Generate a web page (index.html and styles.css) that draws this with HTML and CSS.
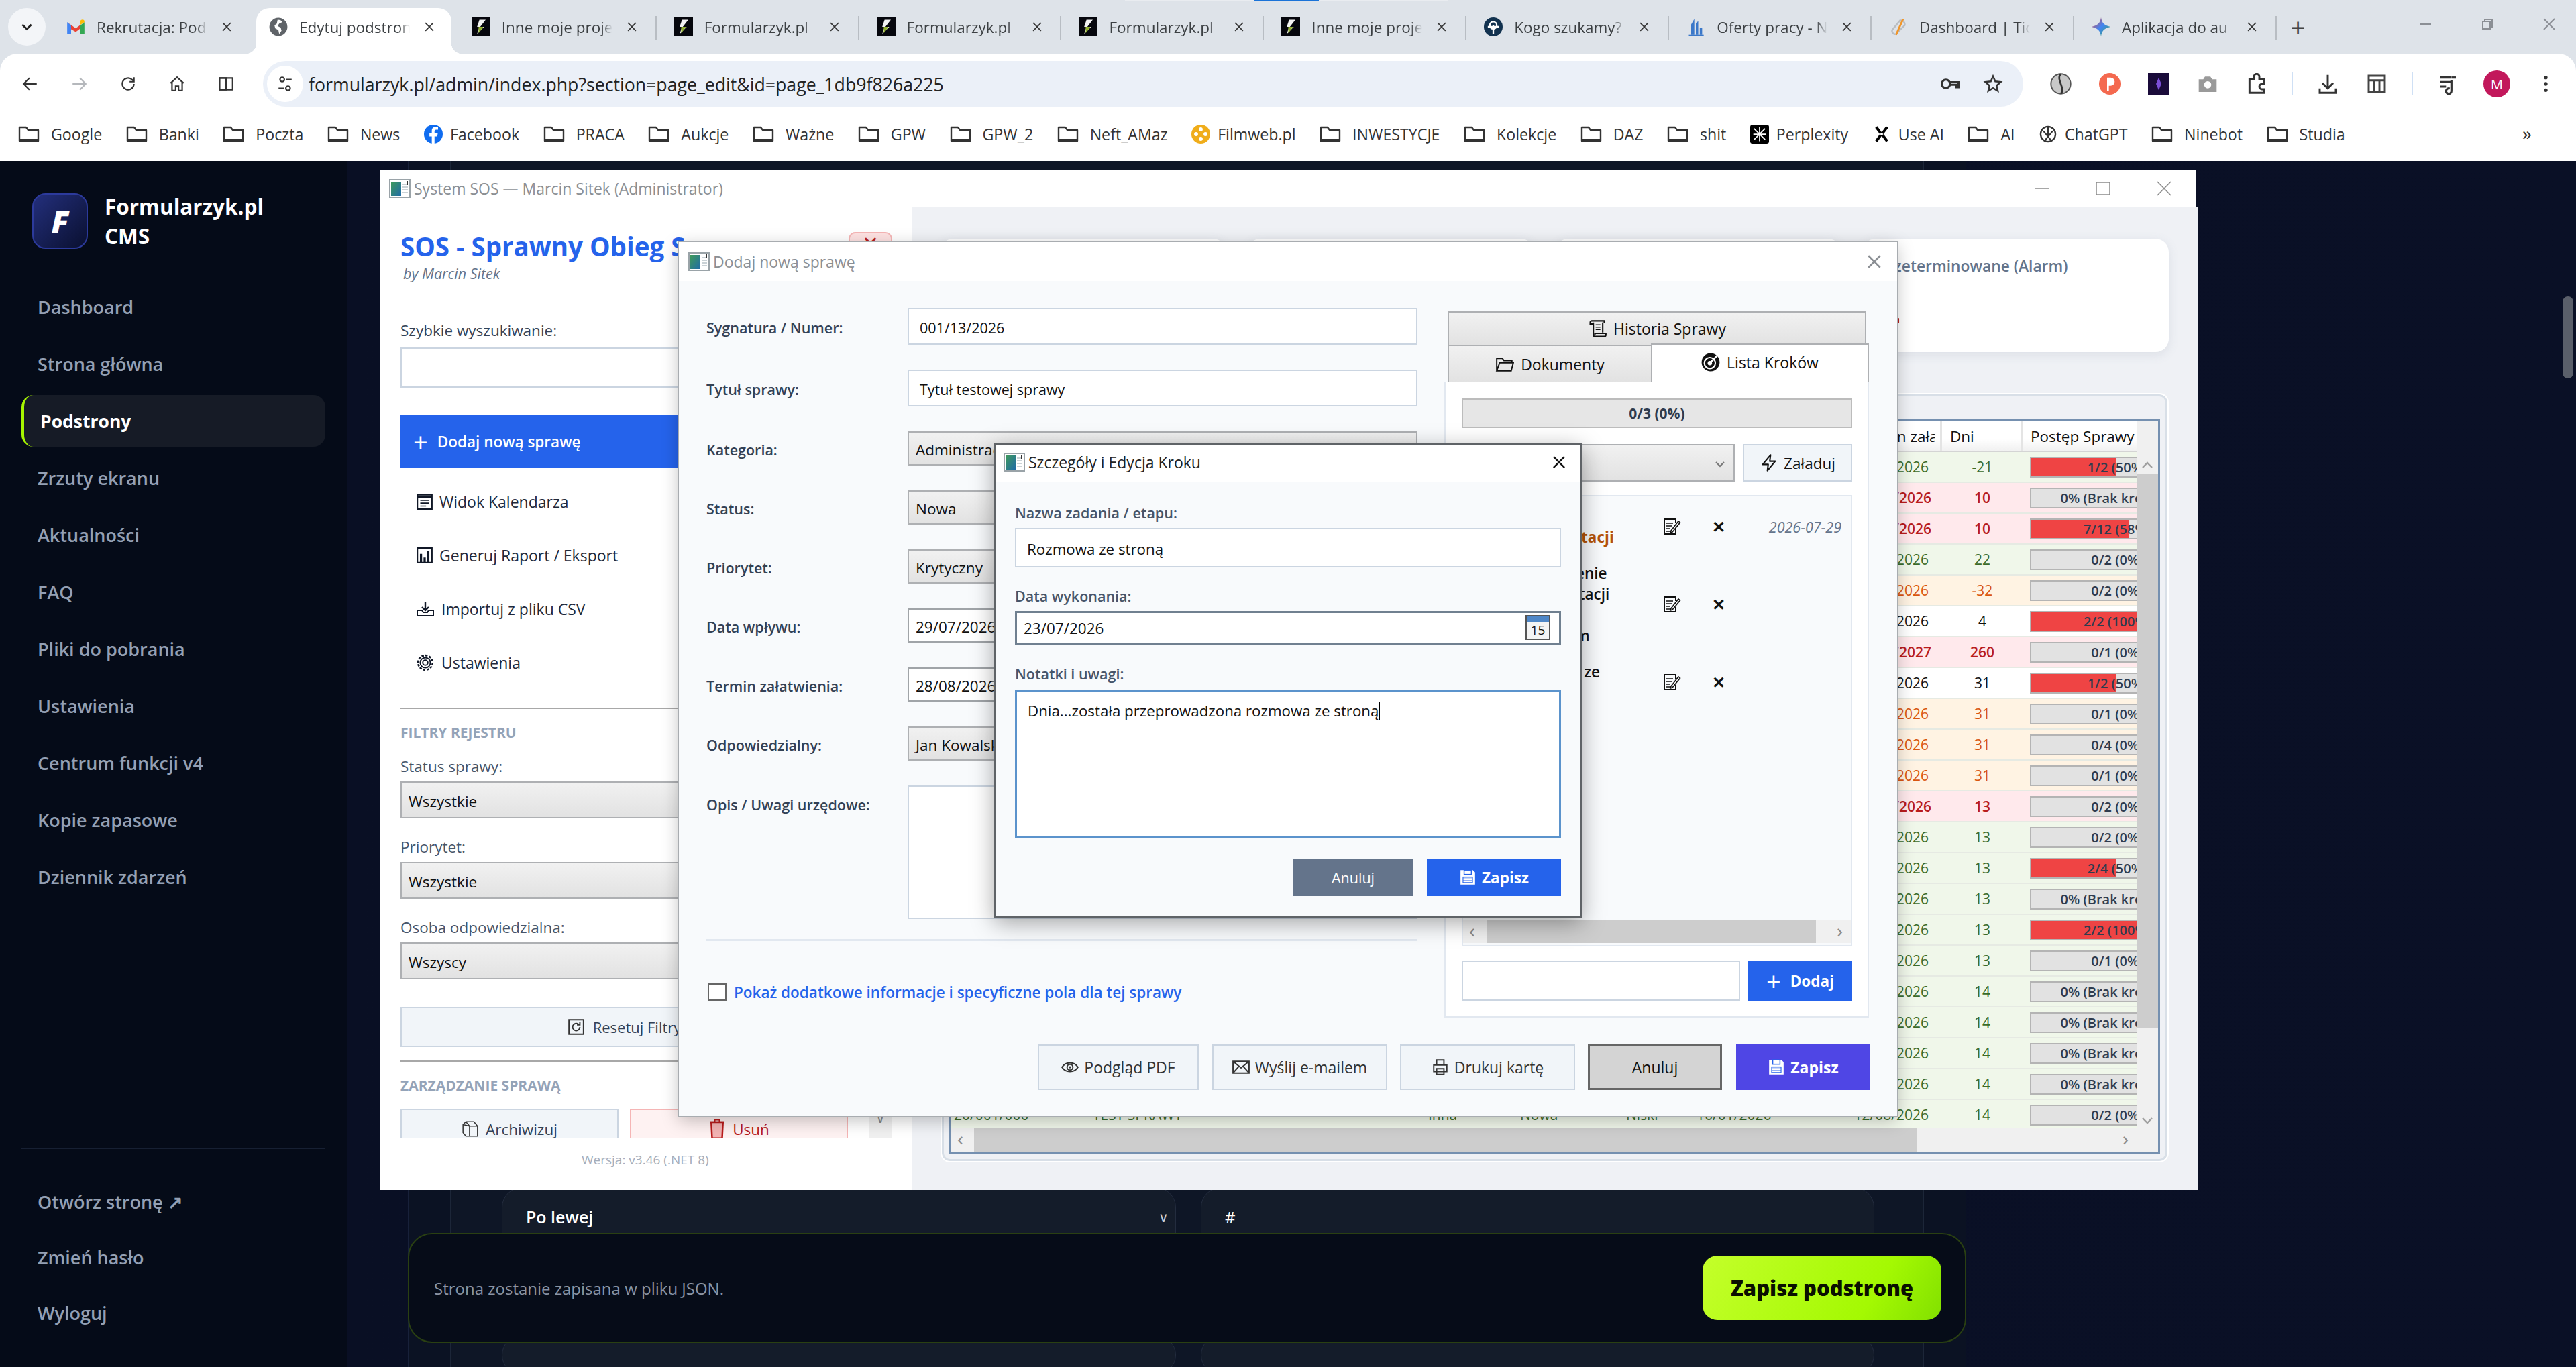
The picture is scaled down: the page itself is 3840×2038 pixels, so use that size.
FILE: index.html
```html
<!DOCTYPE html>
<html lang="pl">
<head>
    <meta charset="UTF-8">
    <title>Edytuj podstronę</title>
    <link rel="stylesheet" href="styles.css">
</head>
<body>
    <svg class="defs" width="0" height="0">
        <defs>
            <symbol id="i-folder" viewBox="0 0 32 24"><path d="M2 2h10l3 4h15v16H2z" fill="none" stroke="currentColor" stroke-width="2.400" stroke-linejoin="round"/><path d="M2 19h28v3.500H2z" fill="currentColor"/></symbol>
            <symbol id="i-x" viewBox="0 0 24 24"><path d="M5 5l14 14M19 5L5 19" fill="none" stroke="currentColor" stroke-width="2"/></symbol>
            <symbol id="i-fav-form" viewBox="0 0 24 24"><rect width="24" height="24" fill="#06070d"/><path d="M10 3h8l-7 9h5l-9 9 3-9H7z" fill="#f4f4f4"/><path d="M9 12h6l-6 8z" fill="#8fae2c"/></symbol>
            <symbol id="i-app" viewBox="0 0 32 32"><rect x="1" y="3" width="30" height="26" fill="#fff" stroke="#9aa3a8" stroke-width="2"/><defs><linearGradient id="g-app" x1="0" y1="0" x2="1" y2="1"><stop offset="0" stop-color="#3f9a5a"/><stop offset="1" stop-color="#1f6ba8"/></linearGradient></defs><rect x="3" y="6" width="15" height="21" fill="url(#g-app)"/><path d="M20 10h8M20 14h8M20 18h8M20 22h8" stroke="#b9c4c9" stroke-width="1.600"/><path d="M27 5v6" stroke="#333" stroke-width="2"/></symbol>
            <symbol id="i-edit" viewBox="0 0 28 28"><path d="M3 3h17v6M20 18v7H3V3" fill="none" stroke="#111" stroke-width="2"/><path d="M6 9h10M6 13h8M6 17h6M6 21h9" stroke="#111" stroke-width="1.400"/><path d="M13 20l11-14 2.500 2L15 22l-3 1z" fill="#fff" stroke="#111" stroke-width="1.600"/></symbol>
            <symbol id="i-save" viewBox="0 0 24 24"><path d="M2 2h17l3 3v17H2z" fill="currentColor"/><rect x="7" y="2" width="10" height="6" fill="none" stroke="#2563eb" stroke-width="1.400"/><rect x="5" y="11" width="14" height="9" fill="#2563eb"/><path d="M6 13h12M6 15.500h12M6 18h12" stroke="currentColor" stroke-width="1.300"/></symbol>
        </defs>
    </svg>

    <header class="browser">
        <div class="tabstrip">
            <button class="tab-search"><svg width="20" height="20" viewBox="0 0 24 24"><path d="M4 8l8 8 8-8" fill="none" stroke="#222" stroke-width="3.400"/></svg></button>
            <div class="tab">
                <svg class="fav" viewBox="0 0 24 24"><path d="M1 21V6l5 4v11z" fill="#4285f4"/><path d="M18 21V10l5-4v15z" fill="#34a853"/><path d="M1 6l11 8 6-4.500V14l-6 4.500L6 15V10z" fill="#ea4335"/><path d="M18 9.500L23 6V5c0-2-2.400-3-4-1.800L18 4z" fill="#fbbc04"/></svg>
                <span class="tab-title">Rekrutacja: Pod</span>
                <svg class="tab-close"><use href="#i-x"/></svg>
            </div>
            <div class="tab tab-active">
                <svg class="fav" viewBox="0 0 24 24"><circle cx="12" cy="12" r="11.500" fill="#5f6368"/><path d="M11 3c3 0 5 1 6 3l-4 2-2 3 4 2 1 4-3 4-1-5-4-2-1-4 3-2z" fill="#fff"/></svg>
                <span class="tab-title">Edytuj podstron</span>
                <svg class="tab-close"><use href="#i-x"/></svg>
            </div>
            <div class="tab">
                <svg class="fav"><use href="#i-fav-form"/></svg>
                <span class="tab-title">Inne moje proje</span>
                <svg class="tab-close"><use href="#i-x"/></svg>
            </div>
            <div class="tab">
                <svg class="fav"><use href="#i-fav-form"/></svg>
                <span class="tab-title">Formularzyk.pl</span>
                <svg class="tab-close"><use href="#i-x"/></svg>
            </div>
            <div class="tab">
                <svg class="fav"><use href="#i-fav-form"/></svg>
                <span class="tab-title">Formularzyk.pl</span>
                <svg class="tab-close"><use href="#i-x"/></svg>
            </div>
            <div class="tab">
                <svg class="fav"><use href="#i-fav-form"/></svg>
                <span class="tab-title">Formularzyk.pl</span>
                <svg class="tab-close"><use href="#i-x"/></svg>
            </div>
            <div class="tab">
                <svg class="fav"><use href="#i-fav-form"/></svg>
                <span class="tab-title">Inne moje proje</span>
                <svg class="tab-close"><use href="#i-x"/></svg>
            </div>
            <div class="tab">
                <svg class="fav" viewBox="0 0 24 24"><circle cx="12" cy="12" r="12" fill="#12324f"/><circle cx="12" cy="10" r="4.500" fill="none" stroke="#fff" stroke-width="2"/><path d="M12 10v11M5 12h14" stroke="#fff" stroke-width="2"/></svg>
                <span class="tab-title">Kogo szukamy?</span>
                <svg class="tab-close"><use href="#i-x"/></svg>
            </div>
            <div class="tab">
                <svg class="fav" viewBox="0 0 24 24"><path d="M6 22V9l4-7v20zM12 22V7l3-2v17zM17 22v-9h3v9z" fill="#3b78c9"/><path d="M3 22h19v2H3z" fill="#3b78c9"/></svg>
                <span class="tab-title">Oferty pracy - N</span>
                <svg class="tab-close"><use href="#i-x"/></svg>
            </div>
            <div class="tab">
                <svg class="fav" viewBox="0 0 24 24"><path d="M14 4a5 5 0 0 1 6 6L9 21a4 4 0 0 1-5-5z" fill="none" stroke="#b9bdc2" stroke-width="2"/><path d="M18 2l-9 20" stroke="#f0962a" stroke-width="2.400"/></svg>
                <span class="tab-title">Dashboard | Tic</span>
                <svg class="tab-close"><use href="#i-x"/></svg>
            </div>
            <div class="tab">
                <svg class="fav" viewBox="0 0 24 24"><defs><linearGradient id="g-gem" x1="0" y1="0" x2="1" y2="1"><stop offset="0" stop-color="#ea4335"/><stop offset=".5" stop-color="#4285f4"/><stop offset="1" stop-color="#34a853"/></linearGradient></defs><path d="M12 0c1 7 4 10 12 12-8 2-11 5-12 12-1-7-4-10-12-12 8-2 11-5 12-12z" fill="url(#g-gem)"/></svg>
                <span class="tab-title">Aplikacja do au</span>
                <svg class="tab-close"><use href="#i-x"/></svg>
            </div>
            <span class="tab-new">+</span>
            <div class="win-controls">
                <svg viewBox="0 0 24 24"><path d="M4 12h16" stroke="#8b8f95" stroke-width="2"/></svg>
                <svg viewBox="0 0 24 24"><path d="M5 8h11v11H5zM8 8V5h11v11h-3" fill="none" stroke="#8b8f95" stroke-width="2"/></svg>
                <svg viewBox="0 0 24 24"><path d="M4 4l16 16M20 4L4 20" stroke="#8b8f95" stroke-width="2"/></svg>
            </div>
        </div>

        <div class="toolbar">
            <div class="nav-icons">
                <svg viewBox="0 0 24 24"><path d="M21 12H4M11 4l-8 8 8 8" fill="none" stroke="#333" stroke-width="2"/></svg>
                <svg viewBox="0 0 24 24"><path d="M3 12h17M13 4l8 8-8 8" fill="none" stroke="#b5b8bc" stroke-width="2"/></svg>
                <svg viewBox="0 0 24 24"><path d="M20 12a8 8 0 1 1-2.500-5.800L20 8.500M20 3v6h-6" fill="none" stroke="#333" stroke-width="2"/></svg>
                <svg viewBox="0 0 24 24"><path d="M3 11l9-8 9 8M5 10v11h5v-6h4v6h5V10" fill="none" stroke="#333" stroke-width="2"/></svg>
                <svg viewBox="0 0 24 24"><path d="M3 4h18v16H3zM12 4v16" fill="none" stroke="#333" stroke-width="2"/><path d="M3 4h9v16H3z" fill="none" stroke="#333" stroke-width="2"/></svg>
            </div>
            <div class="omnibox">
                <span class="site-tune"><svg width="26" height="26" viewBox="0 0 24 24"><circle cx="8" cy="6" r="3" fill="none" stroke="#333" stroke-width="2"/><path d="M13 6h8M3 18h8" stroke="#333" stroke-width="2"/><circle cx="16" cy="18" r="3" fill="none" stroke="#333" stroke-width="2"/></svg></span>
                <span class="url">formularzyk.pl/admin/index.php?section=page_edit&amp;id=page_1db9f826a225</span>
                <svg class="omni-icon" viewBox="0 0 24 24"><circle cx="7" cy="12" r="5" fill="none" stroke="#333" stroke-width="2.400"/><path d="M12 10h10v6h-3v-3h-7" fill="none" stroke="#333" stroke-width="2.400"/></svg>
                <svg class="omni-icon" viewBox="0 0 24 24"><path d="M12 3l2.700 6 6.500.7-4.900 4.300 1.400 6.400L12 17l-5.700 3.400 1.400-6.400-4.900-4.300 6.500-.7z" fill="none" stroke="#333" stroke-width="2"/></svg>
            </div>
            <div class="ext-icons">
                <svg viewBox="0 0 24 24"><circle cx="12" cy="12" r="11" fill="#c8c8c8" stroke="#555" stroke-width="1.500"/><path d="M12 1c-6 6 6 16 0 22" fill="none" stroke="#333" stroke-width="2"/></svg>
                <svg viewBox="0 0 24 24"><circle cx="12" cy="12" r="12" fill="#f4694f"/><path d="M9 5h4a4 4 0 0 1 0 9h-2v6H9z" fill="#fff"/></svg>
                <svg viewBox="0 0 24 24"><rect width="24" height="24" fill="#1a0b3a"/><path d="M12 5l3 7-3 7-3-7z" fill="#7b4ed8"/></svg>
                <svg viewBox="0 0 24 24"><path d="M2 7h5l2-3h6l2 3h5v14H2z" fill="#9a9a9a"/><circle cx="12" cy="13" r="4" fill="#fff"/></svg>
                <svg viewBox="0 0 24 24"><path d="M4 7h5V4a3 3 0 0 1 6 0v3h5v5h-2a3 3 0 0 0 0 6h2v4H4z" fill="none" stroke="#333" stroke-width="2.200"/></svg>
                <i class="ext-sep"></i>
                <svg viewBox="0 0 24 24"><path d="M12 2v14M6 11l6 6 6-6M3 17v5h18v-5" fill="none" stroke="#333" stroke-width="2.200"/></svg>
                <svg viewBox="0 0 24 24"><path d="M3 3h18v18H3zM3 8h18M9 8v13M15 8v13" fill="none" stroke="#444" stroke-width="2.200"/></svg>
                <i class="ext-sep"></i>
                <svg viewBox="0 0 24 24"><path d="M3 5h12M3 10h12M3 15h7" stroke="#333" stroke-width="2.400"/><path d="M16 8v12a3 3 0 1 1-2-2.800" fill="none" stroke="#333" stroke-width="2.400"/><path d="M16 5h5" stroke="#333" stroke-width="2.400"/></svg>
                <span class="avatar">M</span>
                <svg viewBox="0 0 24 24"><circle cx="12" cy="5" r="2" fill="#333"/><circle cx="12" cy="12" r="2" fill="#333"/><circle cx="12" cy="19" r="2" fill="#333"/></svg>
            </div>
        </div>

        <nav class="bookmarks">
            <a><svg class="bm-icon"><use href="#i-folder"/></svg>Google</a>
            <a><svg class="bm-icon"><use href="#i-folder"/></svg>Banki</a>
            <a><svg class="bm-icon"><use href="#i-folder"/></svg>Poczta</a>
            <a><svg class="bm-icon"><use href="#i-folder"/></svg>News</a>
            <a><svg class="bm-icon bm-round" viewBox="0 0 24 24"><circle cx="12" cy="12" r="12" fill="#0f6cf0"/><path d="M13.500 24v-9H17l.6-4h-4.100V8.500c0-1.200.6-2 2-2H18V3c-3-.6-8-.8-8 5v3H7v4h3v9z" fill="#fff"/></svg>Facebook</a>
            <a><svg class="bm-icon"><use href="#i-folder"/></svg>PRACA</a>
            <a><svg class="bm-icon"><use href="#i-folder"/></svg>Aukcje</a>
            <a><svg class="bm-icon"><use href="#i-folder"/></svg>Ważne</a>
            <a><svg class="bm-icon"><use href="#i-folder"/></svg>GPW</a>
            <a><svg class="bm-icon"><use href="#i-folder"/></svg>GPW_2</a>
            <a><svg class="bm-icon"><use href="#i-folder"/></svg>Neft_AMaz</a>
            <a><svg class="bm-icon bm-round" viewBox="0 0 24 24"><circle cx="12" cy="12" r="12" fill="#f0ad1a"/><circle cx="12" cy="6" r="2.500" fill="#fff"/><circle cx="12" cy="18" r="2.500" fill="#fff"/><circle cx="6" cy="12" r="2.500" fill="#fff"/><circle cx="18" cy="12" r="2.500" fill="#fff"/></svg>Filmweb.pl</a>
            <a><svg class="bm-icon"><use href="#i-folder"/></svg>INWESTYCJE</a>
            <a><svg class="bm-icon"><use href="#i-folder"/></svg>Kolekcje</a>
            <a><svg class="bm-icon"><use href="#i-folder"/></svg>DAZ</a>
            <a><svg class="bm-icon"><use href="#i-folder"/></svg>shit</a>
            <a><svg class="bm-icon bm-round" viewBox="0 0 24 24"><rect width="24" height="24" rx="3" fill="#000"/><path d="M12 3v18M5 5l14 14M19 5L5 19M4 12h16" stroke="#fff" stroke-width="1.500"/></svg>Perplexity</a>
            <a><svg class="bm-icon bm-round" viewBox="0 0 24 24"><path d="M5 3l6 8M19 3l-6 8M5 21l6-8M19 21l-6-8" stroke="#000" stroke-width="3.400"/></svg>Use AI</a>
            <a><svg class="bm-icon"><use href="#i-folder"/></svg>AI</a>
            <a><svg class="bm-icon bm-round" viewBox="0 0 24 24"><circle cx="12" cy="12" r="9.500" fill="none" stroke="#333" stroke-width="2"/><path d="M6 8l10 12M18 8L8 20M12 3v11" stroke="#333" stroke-width="1.800"/></svg>ChatGPT</a>
            <a><svg class="bm-icon"><use href="#i-folder"/></svg>Ninebot</a>
            <a><svg class="bm-icon"><use href="#i-folder"/></svg>Studia</a>
            <span class="bm-more">»</span>
        </nav>
    </header>

    <div class="app">
        <aside class="sidebar">
            <div class="brand">
                <div class="logo">F</div>
                <div class="brand-name">Formularzyk.pl<br>CMS</div>
            </div>
            <ul class="menu">
                <li>Dashboard</li>
                <li>Strona główna</li>
                <li class="active">Podstrony</li>
                <li>Zrzuty ekranu</li>
                <li>Aktualności</li>
                <li>FAQ</li>
                <li>Pliki do pobrania</li>
                <li>Ustawienia</li>
                <li>Centrum funkcji v4</li>
                <li>Kopie zapasowe</li>
                <li>Dziennik zdarzeń</li>
            </ul>
            <ul class="menu-bottom">
                <li>Otwórz stronę ↗</li>
                <li>Zmień hasło</li>
                <li>Wyloguj</li>
            </ul>
        </aside>

        <main class="page">
            <div class="editor">
                <div class="editor-inner">
                    <div class="editor-dash">
                        <div class="field-card">
                            <strong>Po lewej</strong><span class="field-caret">∨</span>
                        </div>
                        <div class="field-card">
                            <span class="field-hash">#</span>
                        </div>
                        <div class="field-card field-card-next"></div>
                        <div class="field-card field-card-next"></div>
                    </div>
                </div>
            </div>
        </main>
    </div>

    <div class="page-scroll"></div>

    <div class="savebar">
        <span>Strona zostanie zapisana w pliku JSON.</span>
        <button class="save-page">Zapisz podstronę</button>
    </div>

    <i class="load-bar"></i>

    <!-- okno glowne programu -->
    <section class="win win-main">
        <div class="titlebar">
            <svg class="app-icon"><use href="#i-app"/></svg>
            <span class="title-text">System SOS — Marcin Sitek (Administrator)</span>
            <div class="main-controls">
                <svg viewBox="0 0 24 24"><path d="M1 12h22" stroke="#8a8a8a" stroke-width="1.500"/></svg>
                <svg viewBox="0 0 24 24"><path d="M2 3h20v18H2z" fill="none" stroke="#8a8a8a" stroke-width="1.500"/></svg>
                <svg viewBox="0 0 24 24"><path d="M2 2l20 20M22 2L2 22" stroke="#8a8a8a" stroke-width="1.500"/></svg>
            </div>
        </div>
        <div class="win-body">
            <div class="side">
                <div class="side-scroll">
                    <div class="side-head">
                        <div>
                            <h1>SOS - Sprawny Obieg Spraw</h1>
                            <p class="by">by Marcin Sitek</p>
                        </div>
                        <button class="side-close">✕</button>
                    </div>
                    <label class="side-label search-label">Szybkie wyszukiwanie:</label>
                    <div class="input search-input"></div>
                    <button class="btn-add"><span class="plus">+</span>Dodaj nową sprawę</button>
                    <ul class="side-menu">
                        <li><svg viewBox="0 0 24 24"><path d="M2 2h20v20H2z" fill="none" stroke="#111827" stroke-width="2"/><path d="M2 5h20" stroke="#111827" stroke-width="4"/><path d="M6 10h12M6 14h12M6 18h8" stroke="#111827" stroke-width="1.500"/></svg>Widok Kalendarza</li>
                        <li><svg viewBox="0 0 24 24"><path d="M2 2h20v20H2z" fill="none" stroke="#111827" stroke-width="2"/><path d="M7 10v12M12 15v7M17 6v16" stroke="#111827" stroke-width="3"/></svg>Generuj Raport / Eksport</li>
                        <li class="side-menu-wide"><svg viewBox="0 0 28 24"><path d="M2 14h7l2 3h6l2-3h7v8H2z" fill="none" stroke="#111827" stroke-width="2"/><path d="M14 2v11M9 9l5 5 5-5" fill="none" stroke="#111827" stroke-width="2.400"/></svg>Importuj z pliku CSV</li>
                        <li class="side-menu-wide"><svg viewBox="0 0 24 24"><circle cx="12" cy="12" r="3.500" fill="none" stroke="#111827" stroke-width="1.800"/><circle cx="12" cy="12" r="7" fill="none" stroke="#111827" stroke-width="1.800"/><circle cx="12" cy="12" r="10" fill="none" stroke="#111827" stroke-width="2.400" stroke-dasharray="3.200 2"/></svg>Ustawienia</li>
                    </ul>
                    <hr class="side-rule">
                    <div class="side-section">FILTRY REJESTRU</div>
                    <label class="side-label filter-label filter-first">Status sprawy:</label>
                    <div class="select side-select">Wszystkie</div>
                    <label class="side-label filter-label">Priorytet:</label>
                    <div class="select side-select">Wszystkie</div>
                    <label class="side-label filter-label">Osoba odpowiedzialna:</label>
                    <div class="select side-select">Wszyscy</div>
                    <button class="btn-reset"><svg viewBox="0 0 24 24"><path d="M2 2h20v20H2z" fill="none" stroke="#333" stroke-width="1.800"/><path d="M17 12a5 5 0 1 1-1.500-3.500M17 5v4h-4" fill="none" stroke="#333" stroke-width="1.800"/></svg>Resetuj Filtry</button>
                    <hr class="side-rule side-rule-low">
                    <div class="side-section">ZARZĄDZANIE SPRAWĄ</div>
                    <div class="manage">
                        <button class="btn-archive"><svg viewBox="0 0 24 24"><path d="M6 2h11l5 6v14H6L2 17V6zM6 2l5 6h11M11 8v14M2 6l9 2" fill="none" stroke="#333" stroke-width="1.400"/></svg>Archiwizuj</button>
                        <button class="btn-delete"><svg viewBox="0 0 20 24"><path d="M2 4h16M7 4V1h6v3" stroke="#b91c1c" stroke-width="2" fill="none"/><path d="M3 4l1 19h12l1-19z" fill="#f3b4b4" stroke="#b91c1c" stroke-width="2"/></svg>Usuń</button>
                        <span class="side-arrow">∨</span>
                    </div>
                </div>
                <div class="version">Wersja: v3.46 (.NET 8)</div>
            </div>

            <div class="content">
                <div class="stats">
                    <div class="stat"></div>
                    <div class="stat"></div>
                    <div class="stat"></div>
                    <div class="stat stat-alarm">
                        <div class="stat-label">Przeterminowane (Alarm)</div>
                        <div class="stat-value">2</div>
                    </div>
                </div>
                <div class="table-card">
                    <div class="table-box">
                        <div class="table-top">
                            <div class="table-view">
                                <div class="row row-head">
                                    <span>Sygnatura</span><span>Tytuł sprawy</span><span>Kategoria</span><span>Status</span><span>Priorytet</span><span>Data wpływu</span><span><i class="head-clip">Termin załatwienia</i></span><span>Dni</span><span>Postęp Sprawy</span>
                                </div>
                                <div class="row row-green"><span class="date">19/08/2026</span><span class="days">-21</span><div class="bar"><div class="bar-fill" style="width:50%"></div><b>1/2 (50%)</b></div></div>
                                <div class="row row-red"><span class="date">08/08/2026</span><span class="days">10</span><div class="bar"><b>0% (Brak kroków)</b></div></div>
                                <div class="row row-red"><span class="date">08/08/2026</span><span class="days">10</span><div class="bar"><div class="bar-fill" style="width:58%"></div><b>7/12 (58%)</b></div></div>
                                <div class="row row-green"><span class="date">20/08/2026</span><span class="days">22</span><div class="bar"><b>0/2 (0%)</b></div></div>
                                <div class="row row-orange"><span class="date">27/06/2026</span><span class="days">-32</span><div class="bar"><b>0/2 (0%)</b></div></div>
                                <div class="row"><span class="date">02/08/2026</span><span class="days">4</span><div class="bar"><div class="bar-fill" style="width:100%"></div><b>2/2 (100%)</b></div></div>
                                <div class="row row-red"><span class="date">15/04/2027</span><span class="days">260</span><div class="bar"><b>0/1 (0%)</b></div></div>
                                <div class="row"><span class="date">29/08/2026</span><span class="days">31</span><div class="bar"><div class="bar-fill" style="width:50%"></div><b>1/2 (50%)</b></div></div>
                                <div class="row row-orange"><span class="date">29/08/2026</span><span class="days">31</span><div class="bar"><b>0/1 (0%)</b></div></div>
                                <div class="row row-orange"><span class="date">29/08/2026</span><span class="days">31</span><div class="bar"><b>0/4 (0%)</b></div></div>
                                <div class="row row-orange"><span class="date">29/08/2026</span><span class="days">31</span><div class="bar"><b>0/1 (0%)</b></div></div>
                                <div class="row row-red"><span class="date">11/08/2026</span><span class="days">13</span><div class="bar"><b>0/2 (0%)</b></div></div>
                                <div class="row row-green"><span class="date">11/08/2026</span><span class="days">13</span><div class="bar"><b>0/2 (0%)</b></div></div>
                                <div class="row row-green"><span class="date">11/08/2026</span><span class="days">13</span><div class="bar"><div class="bar-fill" style="width:50%"></div><b>2/4 (50%)</b></div></div>
                                <div class="row row-green"><span class="date">11/08/2026</span><span class="days">13</span><div class="bar"><b>0% (Brak kroków)</b></div></div>
                                <div class="row row-green"><span class="date">11/08/2026</span><span class="days">13</span><div class="bar"><div class="bar-fill" style="width:100%"></div><b>2/2 (100%)</b></div></div>
                                <div class="row row-green"><span class="date">11/08/2026</span><span class="days">13</span><div class="bar"><b>0/1 (0%)</b></div></div>
                                <div class="row row-green"><span class="date">12/08/2026</span><span class="days">14</span><div class="bar"><b>0% (Brak kroków)</b></div></div>
                                <div class="row row-green"><span class="date">12/08/2026</span><span class="days">14</span><div class="bar"><b>0% (Brak kroków)</b></div></div>
                                <div class="row row-green"><span class="date">12/08/2026</span><span class="days">14</span><div class="bar"><b>0% (Brak kroków)</b></div></div>
                                <div class="row row-green"><span class="date">12/08/2026</span><span class="days">14</span><div class="bar"><b>0% (Brak kroków)</b></div></div>
                                <div class="row row-green row-full">
                                    <span>20/001/000</span><span>TEST SPRAWY</span><span>Inna</span><span>Nowa</span><span>Niski</span><span>16/01/2026</span><span class="date">12/08/2026</span><span class="days">14</span><div class="bar"><b>0/2 (0%)</b></div>
                                </div>
                            </div>
                            <div class="vscroll">
                                <svg class="sb-arrow" viewBox="0 0 16 10"><path d="M1 9l7-7 7 7" fill="none" stroke="#a0a0a0" stroke-width="2.400"/></svg>
                                <i class="vthumb"></i>
                                <svg class="sb-arrow sb-arrow-down" viewBox="0 0 16 10"><path d="M1 1l7 7 7-7" fill="none" stroke="#a0a0a0" stroke-width="2.400"/></svg>
                            </div>
                        </div>
                        <div class="hscroll">
                            <span class="hs-left">‹</span><i class="hthumb"></i><span class="hs-right">›</span>
                        </div>
                    </div>
                </div>
            </div>
        </div>
    </section>

    <!-- dodaj nowa sprawe -->
    <section class="win win-case">
        <div class="titlebar titlebar-case">
            <svg class="app-icon"><use href="#i-app"/></svg>
            <span class="title-text">Dodaj nową sprawę</span>
            <svg class="case-close"><use href="#i-x"/></svg>
        </div>
        <div class="case-body">
            <div class="case-columns">
                <div class="case-left">
                    <div class="form-grid">
                        <label>Sygnatura / Numer:</label><div class="input">001/13/2026</div>
                        <label>Tytuł sprawy:</label><div class="input">Tytuł testowej sprawy</div>
                        <label>Kategoria:</label><div class="select">Administracja</div>
                        <label>Status:</label><div class="select">Nowa</div>
                        <label>Priorytet:</label><div class="select">Krytyczny</div>
                        <label>Data wpływu:</label><div class="datebox">29/07/2026</div>
                        <label>Termin załatwienia:</label><div class="datebox">28/08/2026</div>
                        <label>Odpowiedzialny:</label><div class="select">Jan Kowalski</div>
                        <label class="label-top">Opis / Uwagi urzędowe:</label><div class="input-area"></div>
                    </div>
                    <hr class="case-rule">
                    <div class="check-row"><i class="checkbox"></i>Pokaż dodatkowe informacje i specyficzne pola dla tej sprawy</div>
                </div>
                <div class="case-right">
                    <div class="tab-hist"><svg viewBox="0 0 24 24"><path d="M5 2h16v3M5 2a2 2 0 0 0-2 2v2h4v14a2 2 0 0 0 2 2h12a2 2 0 0 0 2-2v-2H9v2M7 4v14M19 4v13" fill="none" stroke="#111" stroke-width="1.800"/><path d="M10 7h6M10 10h6M10 13h6" stroke="#111" stroke-width="1.300"/></svg>Historia Sprawy</div>
                    <div class="tab-row">
                        <div class="tab-docs"><svg viewBox="0 0 26 22"><path d="M2 20V3h8l2 3h11v3M2 20h20l3-11H6z" fill="none" stroke="#111" stroke-width="1.800"/></svg>Dokumenty</div>
                        <div class="tab-steps"><svg viewBox="0 0 24 24"><circle cx="12" cy="12" r="11.500" fill="#111"/><circle cx="11" cy="13" r="7" fill="none" stroke="#fff" stroke-width="1.800"/><circle cx="11" cy="13" r="2.800" fill="#fff"/><path d="M11 13l9-9" stroke="#fff" stroke-width="2"/></svg>Lista Kroków</div>
                    </div>
                    <div class="steps-panel">
                        <div class="steps-progress">0/3 (0%)</div>
                        <div class="steps-tools">
                            <div class="select steps-select"><svg width="14" height="10" viewBox="0 0 14 10"><path d="M1 2l6 6 6-6" fill="none" stroke="#777" stroke-width="2"/></svg></div>
                            <button class="btn-load"><svg viewBox="0 0 24 24"><path d="M14 2L4 14h7l-1 8 10-12h-7z" fill="none" stroke="#111" stroke-width="1.800" stroke-linejoin="round"/></svg>Załaduj</button>
                        </div>
                        <div class="steps-list">
                            <div class="step">
                                <div class="step-name step-late">Analiza<br>dokumentacji</div>
                                <svg class="step-edit"><use href="#i-edit"/></svg>
                                <span class="step-del">✕</span>
                                <em class="step-date">2026-07-29</em>
                            </div>
                            <div class="step">
                                <div class="step-name">Gromadzenie<br>dokumentacji<br>i analiza<br>z zespołem</div>
                                <svg class="step-edit"><use href="#i-edit"/></svg>
                                <span class="step-del">✕</span>
                            </div>
                            <div class="step">
                                <div class="step-name">Rozmowa ze<br>stroną</div>
                                <svg class="step-edit"><use href="#i-edit"/></svg>
                                <span class="step-del">✕</span>
                            </div>
                            <div class="list-hscroll">
                                <span class="hs-left">‹</span><i class="list-thumb"></i><span class="hs-right">›</span>
                            </div>
                        </div>
                        <div class="steps-add">
                            <div class="input steps-input"></div>
                            <button class="btn-primary btn-dodaj"><span class="plus">+</span>Dodaj</button>
                        </div>
                    </div>
                </div>
            </div>
            <div class="case-actions">
                <button class="btn-light btn-pdf"><svg viewBox="0 0 24 24"><path d="M1 12c5-8 17-8 22 0-5 8-17 8-22 0z" fill="none" stroke="#333" stroke-width="1.800"/><circle cx="12" cy="12" r="4" fill="none" stroke="#333" stroke-width="1.800"/><circle cx="12" cy="12" r="1.500" fill="#333"/></svg>Podgląd PDF</button>
                <button class="btn-light btn-mail"><svg viewBox="0 0 24 24"><path d="M1 4h22v16H1zM1 4l11 9 11-9M1 20l8-9M23 20l-8-9" fill="none" stroke="#333" stroke-width="1.800"/></svg>Wyślij e-mailem</button>
                <button class="btn-light btn-print"><svg viewBox="0 0 24 24"><path d="M7 9V2h10v7M3 9h18v9H3zM7 14h10v8H7z" fill="none" stroke="#333" stroke-width="1.800"/></svg>Drukuj kartę</button>
                <button class="btn-cancel">Anuluj</button>
                <button class="btn-indigo"><svg viewBox="0 0 24 24"><use href="#i-save"/></svg>Zapisz</button>
            </div>
        </div>
    </section>

    <!-- edycja kroku -->
    <section class="win win-step">
        <div class="titlebar titlebar-step">
            <svg class="app-icon"><use href="#i-app"/></svg>
            <span class="title-text">Szczegóły i Edycja Kroku</span>
            <svg class="step-close"><use href="#i-x"/></svg>
        </div>
        <div class="step-body">
            <label class="step-label">Nazwa zadania / etapu:</label>
            <div class="input step-input">Rozmowa ze stroną</div>
            <label class="step-label">Data wykonania:</label>
            <div class="datebox step-date-box">
                <span>23/07/2026</span>
                <div class="cal-icon"><i></i><b>15</b></div>
            </div>
            <label class="step-label">Notatki i uwagi:</label>
            <div class="step-area">Dnia...została przeprowadzona rozmowa ze stroną<i class="caret"></i></div>
            <div class="step-actions">
                <button class="btn-grey">Anuluj</button>
                <button class="btn-primary btn-step-save"><svg viewBox="0 0 24 24"><use href="#i-save"/></svg>Zapisz</button>
            </div>
        </div>
    </section>
</body>
</html>
```

FILE: styles.css
```css
* {
    box-sizing: border-box;
}
html, body {
    margin: 0;
    padding: 0;
}
body {
    position: relative;
    width: 3840px;
    height: 2038px;
    overflow: hidden;
    font-family: "Open Sans", "Noto Sans", sans-serif;
    background: #0a1026;
    color: #111;
}
button {
    font-family: inherit;
    cursor: pointer;
}
hr {
    margin: 0;
    border: 0;
}
ul {
    list-style: none;
    margin: 0;
    padding: 0;
}
.defs {
    position: absolute;
}

/* przegladarka */
.browser {
    height: 240px;
    background: #dee3e9;
    color: #333;
}
.tabstrip {
    position: relative;
    display: flex;
    align-items: flex-start;
    height: 80px;
    padding-left: 12px;
    background: #dee3e9;
}
.tab-search {
    display: flex;
    align-items: center;
    justify-content: center;
    width: 56px;
    height: 56px;
    margin: 12px 12px 0 0;
    border: 0;
    border-radius: 28px;
    background: #f3f5f8;
}
.tab {
    position: relative;
    display: flex;
    align-items: center;
    flex: 0 0 301.900px;
    height: 68px;
    margin-top: 12px;
    padding-left: 19px;
    padding-bottom: 12px;
    font-size: 22.500px;
    color: #3c4043;
}
.tab::after {
    content: "";
    position: absolute;
    right: 7px;
    top: 12px;
    width: 2px;
    height: 36px;
    background: #b8bdc3;
}
.tab:nth-child(2)::after {
    display: none;
}
.tab-active::before {
    content: "";
    position: absolute;
    left: 0;
    top: 0;
    bottom: 0;
    width: 291px;
    background: #fff;
    border-radius: 20px 20px 0 0;
}
.tab-active::after {
    left: -16px;
    right: auto;
    top: auto;
    bottom: 0;
    width: 323px;
    height: 16px;
    background:
        radial-gradient(circle at 0 0, transparent 16px, #fff 16.500px) left bottom / 16px 16px no-repeat,
        radial-gradient(circle at 100% 0, transparent 16px, #fff 16.500px) right bottom / 16px 16px no-repeat;
}
.fav, .tab-title, .tab-close {
    position: relative;
}
.fav {
    flex: none;
    width: 28px;
    height: 28px;
}
.tab-title {
    width: 165px;
    margin-left: 17px;
    overflow: hidden;
    white-space: nowrap;
    -webkit-mask-image: linear-gradient(90deg, #000 90%, transparent);
    mask-image: linear-gradient(90deg, #000 90%, transparent);
}
.tab-close {
    width: 20px;
    height: 20px;
    margin-left: 19px;
    color: #333;
}
.tab-new {
    margin: 20px 0 0 14px;
    font-size: 38px;
    line-height: 40px;
    color: #444;
}
.win-controls {
    position: absolute;
    top: 24px;
    right: 28px;
    display: flex;
    gap: 68px;
}
.win-controls svg {
    width: 24px;
    height: 24px;
}
.toolbar {
    display: flex;
    align-items: center;
    height: 90px;
    padding: 0 0 0 32px;
    background: #fff;
    border-radius: 26px 26px 0 0;
}
.nav-icons {
    display: flex;
    gap: 47px;
    width: 360px;
}
.nav-icons svg {
    width: 26px;
    height: 26px;
}
.omnibox {
    display: flex;
    align-items: center;
    width: 2624px;
    height: 68px;
    padding: 0 30px 0 6px;
    border-radius: 34px;
    background: #ebf0f8;
}
.site-tune {
    display: flex;
    align-items: center;
    justify-content: center;
    width: 54px;
    height: 54px;
    border-radius: 27px;
    background: #fff;
}
.url {
    flex: 1;
    margin-left: 8px;
    font-size: 26.700px;
    color: #222;
}
.omni-icon {
    width: 30px;
    height: 30px;
    margin-left: 34px;
}
.ext-icons {
    display: flex;
    align-items: center;
    flex: 1;
    margin-left: 40px;
    gap: 41px;
}
.ext-icons svg {
    flex: none;
    width: 32px;
    height: 32px;
}
.ext-sep {
    width: 2px;
    height: 34px;
    margin: 0 -5px;
    background: #cfe0f5;
}
.avatar {
    display: flex;
    align-items: center;
    justify-content: center;
    flex: none;
    width: 40px;
    height: 40px;
    margin: 0 -4px;
    border-radius: 50%;
    background: #c2185b;
    color: #fff;
    font-size: 20px;
}
.bookmarks {
    display: flex;
    align-items: center;
    gap: 35.500px;
    height: 70px;
    padding: 0 0 10px 27px;
    background: #fff;
    font-size: 23.200px;
    color: #333;
    white-space: nowrap;
}
.bookmarks a {
    display: flex;
    align-items: center;
    gap: 17px;
}
.bm-icon {
    flex: none;
    width: 32px;
    height: 24px;
}
.bm-round {
    width: 28px;
    height: 28px;
    margin-right: -6px;
}
.bm-more {
    position: absolute;
    left: 3760px;
    top: 180px;
    font-size: 28px;
    line-height: 36px;
}
.load-bar {
    position: absolute;
    left: 1677px;
    top: 0;
    width: 482px;
    height: 2px;
    background: linear-gradient(90deg, #e9ecf0 0 40%, #1a73d8 40% 60%, #e9ecf0 60%);
}

/* cms */
.app {
    display: flex;
    height: 1798px;
}
.sidebar {
    display: flex;
    flex-direction: column;
    flex: none;
    width: 518px;
    padding: 48px 32px 0;
    background: #050b18;
    border-right: 1px solid #121a30;
}
.brand {
    display: flex;
    align-items: center;
    gap: 25px;
    padding-left: 16px;
    height: 83px;
}
.logo {
    display: flex;
    align-items: center;
    justify-content: center;
    flex: none;
    width: 83px;
    height: 83px;
    border: 2px solid #2c3a9c;
    border-radius: 20px;
    background: linear-gradient(135deg, #232f7c, #0a1030);
    color: #fff;
    font-size: 46px;
    font-weight: 800;
    font-style: italic;
}
.brand-name {
    color: #fff;
    font-size: 31.500px;
    font-weight: 700;
    line-height: 44px;
}
.menu {
    flex: 1;
    margin-top: 44px;
}
.menu li, .menu-bottom li {
    display: flex;
    align-items: center;
    height: 85px;
    padding-left: 24px;
    font-size: 27px;
    font-weight: 600;
    color: #94a0b4;
}
.menu li.active {
    height: 77px;
    margin: 4px 0;
    padding-left: 24px;
    border-left: 4px solid #a6f500;
    border-radius: 18px;
    background: #161b26;
    font-size: 26.500px;
    color: #fff;
    font-weight: 700;
}
.menu-bottom {
    margin-bottom: 39px;
    padding-top: 37px;
    border-top: 2px solid #172033;
}
.menu-bottom li {
    height: 83px;
}

/* tlo strony pod oknem */
.page {
    flex: 1;
    padding-left: 90px;
    background: linear-gradient(90deg, #090f24, #0a1026);
}
.editor {
    width: 2323px;
    height: 100%;
    padding: 0 62px;
    border: solid #18213a;
    border-width: 0 1px;
    background: #0b1223;
}
.editor-inner {
    height: 100%;
    padding: 0 40px;
    border: solid #1c2638;
    border-width: 0 1px;
    background: #0e1626;
}
.editor-dash {
    display: grid;
    grid-template-columns: 1005px 1004px;
    grid-template-rows: 220px 48px;
    column-gap: 37px;
    height: 100%;
    padding: 1530px 35px 0 35px;
    border: dashed #2a3446;
    border-width: 0 1px;
}
.field-card {
    display: flex;
    align-items: center;
    justify-content: space-between;
    height: 200px;
    padding: 0 10px 112px 35px;
    border: 1px solid #232c3e;
    border-radius: 30px;
    background: #141c2a;
    color: #fff;
}
.field-card-next {
    height: 60px;
    padding: 0;
}
.field-card strong {
    font-size: 25px;
    font-weight: 600;
}
.field-caret {
    font-size: 20px;
    color: #c8ccd4;
}
.field-hash {
    font-size: 24px;
}
.page-scroll {
    position: absolute;
    left: 3820px;
    top: 442px;
    width: 16px;
    height: 122px;
    border-radius: 8px;
    background: #5a5f6a;
}
.savebar {
    position: absolute;
    left: 608px;
    top: 1838px;
    display: flex;
    align-items: center;
    justify-content: space-between;
    width: 2323px;
    height: 164px;
    padding: 0 35px 0 37px;
    border: 2px solid #2a4012;
    border-radius: 36px;
    background: #060c18;
    color: #8a94a4;
    font-size: 24px;
}
.save-page {
    width: 356px;
    height: 96px;
    border: 0;
    border-radius: 22px;
    background: linear-gradient(120deg, #c4ff2a, #a4f902 70%, #82e000);
    color: #0a0f00;
    font-size: 31px;
    font-weight: 800;
}

/* okna */
.win {
    position: absolute;
}
.win-main {
    left: 566px;
    top: 253px;
    width: 2707px;
    height: 1521px;
    display: flex;
    flex-direction: column;
    background: #fff;
}
.titlebar {
    display: flex;
    align-items: center;
    flex: none;
    height: 56px;
    padding-left: 14px;
    background: #fff;
    color: #8b8f94;
    font-size: 23px;
}
.app-icon {
    flex: none;
    width: 32px;
    height: 32px;
    margin-right: 5px;
}
.main-controls {
    display: flex;
    align-items: center;
    gap: 67px;
    margin-left: auto;
    margin-right: 35px;
}
.main-controls svg {
    width: 24px;
    height: 24px;
}
.win-body {
    display: flex;
    flex: 1;
    min-height: 0;
}
.side {
    flex: none;
    width: 793px;
    padding-left: 31px;
    background: #fff;
}
.side-scroll {
    width: 733px;
    height: 1388px;
    overflow: hidden;
}
.side-head {
    display: flex;
    justify-content: space-between;
    height: 112px;
    padding-top: 34px;
}
.side-head h1 {
    margin: 0;
    font-size: 38.500px;
    line-height: 48px;
    font-weight: 700;
    color: #2563eb;
    white-space: nowrap;
}
.by {
    margin: 4px 0 0 4px;
    font-size: 21.500px;
    line-height: 26px;
    font-style: italic;
    color: #64748b;
}
.side-close {
    flex: none;
    width: 65px;
    height: 60px;
    margin-top: 3px;
    padding: 0 0 26px;
    border: 2px solid #f5b5b5;
    border-radius: 10px;
    background: #fee2e2;
    color: #b91c1c;
    font-size: 30px;
    line-height: 30px;
}
.side-label {
    display: block;
    font-size: 22.500px;
    line-height: 30px;
    color: #334155;
}
.search-label {
    margin-top: 57px;
    font-weight: 500;
}
.filter-label {
    margin-top: 28px;
    height: 30px;
    color: #475569;
}
.filter-label.filter-first {
    margin-top: 21px;
}
.input, .select, .datebox {
    display: flex;
    align-items: center;
    padding-top: 3px;
    font-size: 21.500px;
    color: #111;
    white-space: nowrap;
}
.select, .datebox {
    font-size: 22.500px;
}
.input {
    height: 55px;
    padding-left: 16px;
    border: 2px solid #cbd5e1;
    background: #fff;
}
.search-input {
    height: 60px;
    margin-top: 10px;
}
.select {
    padding-left: 10px;
    border: 2px solid #aeb0b3;
    background: linear-gradient(#f1f1f1, #e2e2e2);
}
.datebox {
    padding-left: 10px;
    border: 2px solid #a0a4a8;
    background: #fff;
}
.btn-add {
    display: flex;
    align-items: center;
    width: 100%;
    height: 80px;
    margin-top: 40px;
    padding-left: 19px;
    border: 0;
    background: #2563eb;
    color: #fff;
    font-size: 22.500px;
    font-weight: 600;
}
.plus {
    margin-right: 14px;
    font-size: 38px;
    line-height: 30px;
    font-weight: 400;
}
.side-menu {
    margin-top: 10px;
}
.side-menu li {
    display: flex;
    align-items: center;
    height: 80px;
    padding-left: 23px;
    font-size: 23px;
    color: #1e293b;
}
.side-menu svg {
    width: 26px;
    height: 26px;
    margin-right: 9px;
}
.side-menu-wide svg {
    width: 28px;
    margin-right: 10px;
}
.side-rule {
    height: 2px;
    margin-top: 27px;
    background: #a8a8a8;
}
.side-section {
    margin-top: 20px;
    font-size: 21px;
    line-height: 30px;
    font-weight: 700;
    color: #94a3b8;
}
.side-select {
    height: 55px;
    width: 667px;
    margin-top: 7px;
}
.btn-reset {
    display: flex;
    align-items: center;
    justify-content: center;
    width: 667px;
    height: 60px;
    margin-top: 41px;
    border: 2px solid #cbd5e1;
    background: #f1f5f9;
    font-size: 22px;
    color: #334155;
}
.btn-reset svg {
    width: 26px;
    height: 28px;
    margin-right: 12px;
}
.side-rule-low {
    margin-top: 20px;
}
.manage {
    display: flex;
    margin-top: 20px;
    height: 60px;
    position: relative;
}
.btn-archive, .btn-delete {
    display: flex;
    align-items: center;
    justify-content: center;
    width: 325px;
    height: 60px;
    font-size: 22.500px;
}
.btn-archive {
    border: 2px solid #cbd5e1;
    background: #f1f5f9;
    color: #334155;
}
.btn-delete {
    margin-left: 17px;
    border: 2px solid #f5b5b5;
    background: #fef2f2;
    color: #b91c1c;
}
.btn-archive svg, .btn-delete svg {
    width: 26px;
    height: 30px;
    margin-right: 10px;
}
.side-arrow {
    display: flex;
    align-items: flex-start;
    justify-content: center;
    width: 35px;
    height: 44px;
    margin-left: 31px;
    background: #f0f0f0;
    color: #888;
    font-size: 20px;
}
.version {
    width: 733px;
    margin-top: 19px;
    padding-left: 270px;
    font-size: 19px;
    line-height: 26px;
    color: #a4adba;
}

.content {
    flex: 1;
    padding: 47px 43px 0 45px;
    background: #eff1f5;
}
.stats {
    display: grid;
    grid-template-columns: 427px 428px 427px 457px;
    column-gap: 31px;
    margin-left: -3px;
}
.stat {
    height: 169px;
    border-radius: 20px;
    background: #fff;
    box-shadow: 0 4px 16px rgba(100, 116, 139, .14);
}
.stat-alarm {
    padding: 27px 0 0 24px;
}
.stat-label {
    font-size: 22.800px;
    line-height: 28px;
    font-weight: 600;
    color: #64748b;
}
.stat-value {
    margin: 19px 0 0 3px;
    font-size: 52px;
    line-height: 62px;
    font-weight: 700;
    color: #b91c1c;
}
.table-card {
    width: 1827px;
    height: 1143px;
    margin-top: 63px;
    padding: 33px 8px 8px 8px;
    border: 3px solid #d8dfe7;
    border-radius: 12px;
    outline: 2px solid #fff;
}
.table-box {
    display: flex;
    flex-direction: column;
    height: 100%;
    border: 3px solid #7590b0;
    background: #f0f0f0;
}
.table-top {
    display: flex;
    flex: 1;
    min-height: 0;
}
.table-view {
    flex: 1;
    overflow: hidden;
    min-width: 0;
}
.row {
    display: grid;
    grid-template-columns: 207px 500px 137px 158px 105px 235px 135px 120px 300px;
    align-items: center;
    width: 1797px;
    height: 46px;
    border-bottom: 2px solid #e6eae3;
    background: #fff;
    font-size: 21px;
    color: #111;
    white-space: nowrap;
}
.row-head {
    height: 47px;
    border-bottom: 2px solid #d4d4d4;
    background: linear-gradient(#fff 60%, #f1f1f1);
    font-size: 22.500px;
}
.row-head span {
    height: 100%;
    line-height: 47px;
    padding-left: 5px;
    overflow: hidden;
    border-right: 3px solid #e4e4e4;
}
.row-head span:nth-child(7) {
    padding-left: 7px;
}
.row-head span:nth-child(8) {
    padding-left: 12px;
}
.row-head span:last-child {
    padding-left: 12px;
    border: 0;
}
.head-clip {
    display: block;
    width: 118px;
    overflow: hidden;
    font-style: normal;
}
.row-green {
    background: #f0f7ea;
    color: #3a6b2a;
}
.row-red {
    background: #ffe9ec;
    color: #b91c1c;
    font-weight: 600;
}
.row-orange {
    background: #fff3e3;
    color: #d9560f;
}
.row > .date {
    grid-column: 7;
    text-align: right;
    padding-right: 20px;
}
.row-red > .date {
    padding-right: 16px;
}
.row-full > span:not(.date):not(.days) {
    padding-left: 4px;
}
.days {
    text-align: center;
}
.bar {
    position: relative;
    display: flex;
    align-items: center;
    justify-content: center;
    width: 260px;
    height: 31px;
    margin: 0 0 0 11px;
    border: 2px solid #b4b4b4;
    background: #e2e2e2;
    overflow: hidden;
}
.bar b {
    position: relative;
    font-size: 20px;
    font-weight: 600;
    color: #2f3b4e;
}
.bar-fill {
    position: absolute;
    left: -2px;
    top: -2px;
    bottom: -2px;
    background: #ef4444;
}
.vscroll {
    position: relative;
    flex: none;
    width: 32px;
    background: #f0f0f0;
}
.sb-arrow {
    position: absolute;
    left: 8px;
    top: 61px;
    width: 16px;
    height: 10px;
}
.sb-arrow-down {
    top: 1039px;
}
.vthumb {
    position: absolute;
    left: 0;
    top: 80px;
    width: 32px;
    height: 825px;
    background: #cdcdcd;
}
.hscroll {
    position: relative;
    flex: none;
    height: 35px;
    background: #f0f0f0;
}
.hthumb {
    position: absolute;
    left: 34px;
    top: 0;
    bottom: 0;
    width: 1406px;
    background: #cdcdcd;
}
.hs-left, .hs-right {
    position: absolute;
    top: 0;
    line-height: 30px;
    font-size: 30px;
    color: #8a8a8a;
}
.hs-left {
    left: 9px;
}
.hs-right {
    right: 44px;
}

/* dialog sprawy */
.win-case {
    left: 1012px;
    top: 361px;
    width: 1816px;
    height: 1303px;
    background: #f8fafc;
    box-shadow: 0 0 0 1px #a8acb0, 0 6px 24px rgba(0, 0, 0, .25);
}
.titlebar-case {
    height: 58px;
}
.case-close {
    width: 30px;
    height: 30px;
    margin-left: auto;
    margin-right: 19px;
    color: #8b8f94;
}
.case-body {
    height: 1245px;
    padding: 40px 40px 0 41px;
}
.case-columns {
    display: grid;
    grid-template-columns: 1060px 633px;
    column-gap: 40px;
    height: 1057px;
}
.form-grid {
    display: grid;
    grid-template-columns: 300px 760px;
    grid-template-rows: 55px 55px 51px 51px 51px 51px 51px 51px 199px;
    row-gap: 37px;
    align-items: center;
}
.form-grid label {
    padding-top: 4px;
    font-size: 21.500px;
    font-weight: 600;
    color: #334155;
}
.form-grid label.label-top {
    align-self: start;
    margin-top: 10px;
}
.form-grid > div {
    height: 100%;
}
.input-area {
    border: 2px solid #cbd5e1;
    background: #fff;
}
.case-rule {
    height: 3px;
    margin-top: 30px;
    background: #e2e8f0;
}
.check-row {
    display: flex;
    align-items: center;
    margin-top: 63px;
    height: 26px;
    padding-left: 2px;
    color: #2563eb;
    font-size: 22.500px;
    font-weight: 600;
    white-space: nowrap;
}
.checkbox {
    width: 28px;
    height: 26px;
    margin-right: 11px;
    border: 2px solid #666;
    background: #fff;
}
.case-right {
    padding-top: 5px;
}
.tab-hist {
    display: flex;
    align-items: center;
    justify-content: center;
    width: 624px;
    height: 52px;
    margin-left: 5px;
    border: 2px solid #aeb0b3;
    background: linear-gradient(#f1f1f1, #e2e2e2);
    font-size: 23px;
    font-weight: 500;
}
.tab-hist svg, .tab-docs svg, .tab-steps svg {
    width: 28px;
    height: 28px;
    margin-right: 10px;
}
.tab-row {
    display: flex;
    align-items: flex-end;
    height: 53px;
    margin-left: 5px;
    position: relative;
    z-index: 1;
}
.tab-docs, .tab-steps {
    display: flex;
    align-items: center;
    justify-content: center;
    font-size: 23px;
    font-weight: 500;
}
.tab-docs {
    width: 303px;
    height: 53px;
    border-left: 2px solid #aeb0b3;
    background: linear-gradient(#f1f1f1, #e2e2e2);
}
.tab-steps {
    width: 325px;
    height: 57px;
    margin-top: -4px;
    border: 2px solid #aeb0b3;
    border-bottom: 0;
    background: #fff;
    padding-bottom: 4px;
}
.steps-panel {
    height: 948px;
    padding: 25px 23px 0 24px;
    border: 2px solid #e2e8f0;
    border-top: 0;
    background: #fff;
}
.steps-progress {
    height: 44px;
    line-height: 40px;
    border: 2px solid #bcbcbc;
    background: #e6e6e6;
    text-align: center;
    font-size: 21px;
    font-weight: 700;
    color: #2f3b4e;
}
.steps-tools {
    display: flex;
    justify-content: space-between;
    margin-top: 24px;
}
.steps-select {
    justify-content: flex-end;
    width: 407px;
    height: 56px;
    padding-right: 13px;
}
.btn-load {
    display: flex;
    align-items: center;
    justify-content: center;
    width: 163px;
    height: 56px;
    border: 2px solid #cbd5e1;
    background: #f1f5f9;
    font-size: 22.500px;
    font-weight: 500;
    color: #111;
}
.btn-load svg {
    width: 28px;
    height: 30px;
    margin-right: 8px;
}
.steps-list {
    position: relative;
    height: 673px;
    margin-top: 20px;
    padding: 14px 14px 0 16px;
    border: 2px solid #e2e8f0;
    background: #f8fafc;
}
.step {
    display: grid;
    grid-template-columns: 263px 64px 76px 1fr;
    align-items: center;
    margin-bottom: 23px;
}
.step-name {
    padding-left: 53px;
    font-size: 22.500px;
    line-height: 31px;
    font-weight: 600;
    white-space: nowrap;
}
.step-late {
    font-weight: 700;
    color: #b45309;
}
.step-edit {
    justify-self: center;
    width: 28px;
    height: 28px;
}
.step-del {
    text-align: center;
    font-size: 24px;
    line-height: 28px;
    font-weight: 700;
}
.step-date {
    text-align: right;
    font-size: 21.500px;
    color: #64748b;
}
.list-hscroll {
    position: absolute;
    left: 0;
    right: 0;
    bottom: 3px;
    height: 34px;
    background: #f0f0f0;
}
.list-thumb {
    position: absolute;
    left: 36px;
    top: 0;
    bottom: 0;
    width: 490px;
    background: #cdcdcd;
}
.list-hscroll .hs-right {
    right: 12px;
}
.steps-add {
    display: flex;
    justify-content: space-between;
    margin-top: 21px;
}
.steps-input {
    width: 415px;
    height: 60px;
}
.btn-primary {
    display: flex;
    align-items: center;
    justify-content: center;
    border: 0;
    background: #2563eb;
    color: #fff;
    font-size: 22.500px;
    font-weight: 700;
}
.btn-dodaj {
    width: 155px;
    height: 60px;
}
.case-actions {
    display: flex;
    justify-content: flex-end;
    gap: 19px;
    margin-top: 41px;
    height: 68px;
}
.btn-light, .btn-cancel, .btn-indigo {
    display: flex;
    align-items: center;
    justify-content: center;
    height: 68px;
    font-size: 23px;
}
.btn-light {
    border: 2px solid #cbd5e1;
    background: #f1f5f9;
    color: #333;
}
.btn-light svg, .btn-indigo svg {
    width: 26px;
    height: 26px;
    margin-right: 8px;
}
.btn-pdf {
    width: 240px;
}
.btn-mail {
    margin-left: 1px;
    width: 261px;
}
.btn-print {
    width: 261px;
}
.btn-cancel {
    width: 200px;
    margin-right: 2px;
    border: 3px solid #666;
    background: #d4d4d4;
    color: #111;
}
.btn-indigo {
    width: 200px;
    border: 0;
    background: #4f46e5;
    color: #fff;
    font-weight: 700;
}

/* dialog kroku */
.win-step {
    left: 1482px;
    top: 661px;
    width: 876px;
    height: 707px;
    border: 2px solid #5f6367;
    background: #f8fafc;
    box-shadow: 0 8px 32px rgba(0, 0, 0, .35);
}
.titlebar-step {
    height: 55px;
    padding-left: 12px;
    padding-bottom: 3px;
    color: #222;
}
.step-close {
    width: 28px;
    height: 28px;
    margin-left: auto;
    margin-right: 18px;
    margin-bottom: 1px;
    color: #111;
}
.step-body {
    padding: 32px 29px 0 29px;
}
.step-label {
    display: block;
    height: 30px;
    font-size: 21.500px;
    line-height: 30px;
    font-weight: 600;
    color: #475569;
}
.step-input {
    height: 59px;
    margin-top: 7px;
    font-size: 22.300px;
}
.step-input + .step-label {
    margin-top: 28px;
}
.step-date-box {
    justify-content: space-between;
    height: 51px;
    margin-top: 7px;
    padding: 0 13px 0 10px;
    border: 3px solid #708090;
}
.step-date-box + .step-label {
    margin-top: 28px;
}
.cal-icon {
    position: relative;
    width: 37px;
    height: 37px;
    margin-top: -3px;
    border: 2px solid #555;
    background: #f4f4f4;
    text-align: center;
}
.cal-icon i {
    display: block;
    height: 9px;
    background: #4f87c7;
}
.cal-icon b {
    display: block;
    font-size: 19px;
    line-height: 23px;
    font-weight: 400;
}
.step-area {
    height: 222px;
    margin-top: 8px;
    padding: 14px 16px;
    border: 3px solid #5b93cc;
    background: #fff;
    font-size: 22.300px;
    line-height: 30px;
}
.caret {
    display: inline-block;
    width: 2px;
    height: 28px;
    vertical-align: -6px;
    background: #000;
}
.step-actions {
    display: flex;
    justify-content: flex-end;
    gap: 20px;
    margin-top: 30px;
}
.btn-grey {
    width: 180px;
    height: 56px;
    border: 0;
    background: #64748b;
    color: #fff;
    font-size: 21.500px;
}
.btn-step-save {
    width: 200px;
    height: 56px;
}
.btn-step-save svg {
    width: 26px;
    height: 26px;
    margin-right: 8px;
}
```
